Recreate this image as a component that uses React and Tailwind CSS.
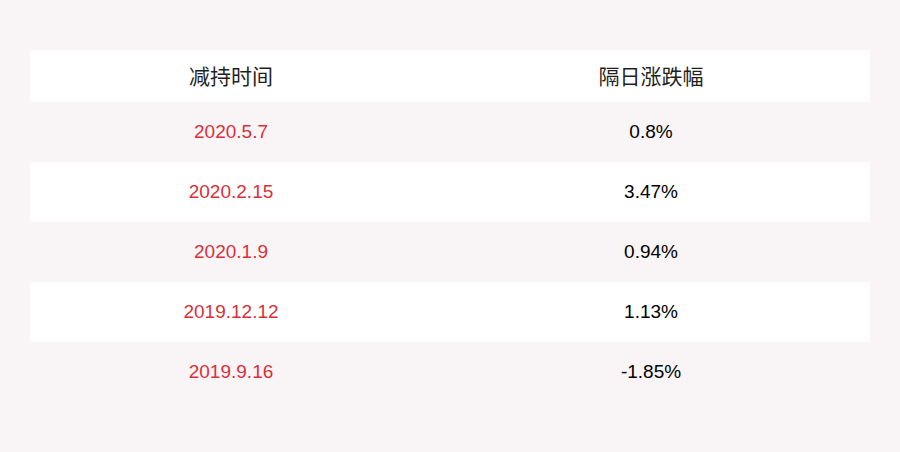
import React from "react";

const rows = [
  ["2020.5.7", "0.8%"],
  ["2020.2.15", "3.47%"],
  ["2020.1.9", "0.94%"],
  ["2019.12.12", "1.13%"],
  ["2019.9.16", "-1.85%"],
];

export default function App() {
  return (
    <div className="w-[900px] h-[452px] bg-[#f9f5f6] pt-[50px] px-[30px] font-['Liberation_Sans','Noto_Sans_CJK_SC',sans-serif]">
      <div className="flex flex-col">
        {/* header */}
        <div className="grid grid-cols-2 h-[52px] bg-white items-center text-[21px] text-[#1f1f1f]">
          <div className="text-center pr-[18px] font-['Noto_Sans_CJK_SC',sans-serif]">减持时间</div>
          <div className="text-center pr-[18px] font-['Noto_Sans_CJK_SC',sans-serif]">隔日涨跌幅</div>
        </div>

        {rows.map(([date, pct], i) => (
          <div
            key={date}
            className={`grid grid-cols-2 h-[60px] items-center text-[19px] ${
              i % 2 === 1 ? "bg-white" : "bg-[#f9f5f6]"
            }`}
          >
            <div className="text-center pr-[18px] text-[#d9303a]">{date}</div>
            <div className="text-center pr-[18px] text-black">{pct}</div>
          </div>
        ))}
      </div>
    </div>
  );
}
